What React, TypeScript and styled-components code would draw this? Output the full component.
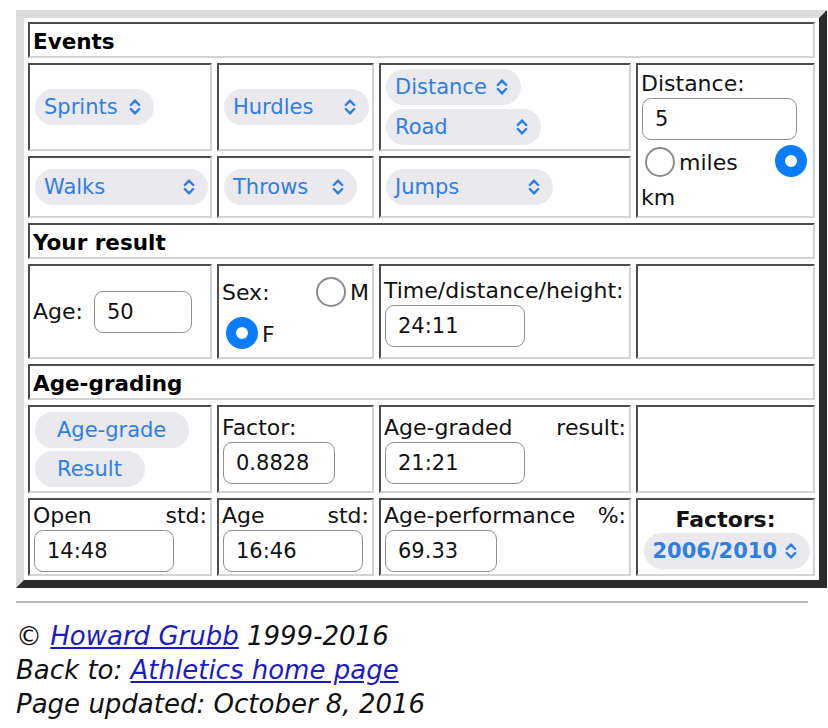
import React from "react";
import styled, { createGlobalStyle } from "styled-components";

const GlobalStyle = createGlobalStyle`
  body {
    margin: 0;
    padding: 10px 16px 0;
    background: #fff;
    color: #111;
    font-family: "DejaVu Sans", Verdana, sans-serif;
  }
`;

const Frame = styled.div`
  box-sizing: border-box;
  width: 811px;
  border: 8px solid;
  border-color: #dcdcdc #2b2b2b #2b2b2b #dcdcdc;
  padding: 4px;
  display: grid;
  grid-template-columns: 184px 157px 252px 179px;
  grid-template-rows: 36px 88px 62px 36px 95px 36px 88px 78px;
  gap: 5px;
`;

const Cell = styled.div<{ $rows?: number; $center?: boolean }>`
  box-sizing: border-box;
  min-width: 0;
  border: 2px solid;
  border-color: #4d4d4d #d3d3d3 #d3d3d3 #4d4d4d;
  padding: 0 3px;
  display: flex;
  flex-direction: column;
  justify-content: center;
  align-items: ${(p) => (p.$center ? "center" : "stretch")};
  grid-row: ${(p) => (p.$rows ? `span ${p.$rows}` : "auto")};
  font-size: 22px;
  line-height: 28px;
`;

const Heading = styled(Cell)`
  grid-column: 1 / -1;
  padding-top: 3px;
  font-weight: bold;
  font-size: 21.5px;
  color: #000;
`;

const Stack = styled.div`
  display: flex;
  flex-direction: column;
  align-items: flex-start;
  gap: 4px;
`;

const Select = styled.div<{ $w: number; $bold?: boolean }>`
  box-sizing: border-box;
  width: ${(p) => p.$w}px;
  height: 36px;
  margin-left: 2px;
  padding: 0 13px 0 9px;
  border-radius: 18px;
  background: #e9e9ee;
  color: #2f7fe2;
  font-size: 21px;
  font-weight: ${(p) => (p.$bold ? "bold" : "normal")};
  display: flex;
  align-items: center;
  justify-content: space-between;
  align-self: ${(p) => (p.$bold ? "center" : "flex-start")};
  flex: none;
`;

const PillButton = styled.div`
  box-sizing: border-box;
  height: 36px;
  margin-left: 2px;
  padding: 0 23px 0 22px;
  border-radius: 18px;
  background: #e9e9ee;
  color: #2f7fe2;
  font-size: 21px;
  display: flex;
  align-items: center;
`;

const Field = styled.input<{ $w: number }>`
  box-sizing: border-box;
  width: ${(p) => p.$w}px;
  height: 42px;
  margin: 1px 0 0 1px;
  padding: 0 12px;
  border: 1.5px solid #8f8f8f;
  border-radius: 9px;
  background: #fff;
  color: #111;
  font: 21px "DejaVu Sans", Verdana, sans-serif;
  outline: none;
  flex: none;
`;

const Label = styled.div<{ $spread?: boolean; $bold?: boolean }>`
  display: flex;
  justify-content: ${(p) => (p.$spread ? "space-between" : "flex-start")};
  font-weight: ${(p) => (p.$bold ? "bold" : "normal")};
  line-height: 27px;
`;

const Line = styled.div<{ $spread?: boolean }>`
  display: flex;
  align-items: flex-end;
  justify-content: ${(p) => (p.$spread ? "space-between" : "flex-start")};
  min-height: 32px;
`;

const UnitLine = styled(Line)`
  margin-top: 5px;
`;

const UnitLabel = styled(Label)`
  margin-top: 7px;
`;

const InlineRow = styled.div`
  display: flex;
  align-items: center;
  gap: 10px;
`;

const Choice = styled.label`
  display: flex;
  align-items: flex-end;
  gap: 4px;
`;

const Radio = styled.span<{ $on?: boolean; $end?: boolean }>`
  box-sizing: border-box;
  flex: none;
  width: ${(p) => (p.$on ? 32 : 30)}px;
  height: ${(p) => (p.$on ? 32 : 30)}px;
  margin: ${(p) => (p.$end ? "0 3px 0 0" : "0 0 0 4px")};
  border-radius: 50%;
  border: ${(p) => (p.$on ? "10px solid #0a7cff" : "2px solid #8c8c8c")};
  background: #fff;
`;

const Rule = styled.hr`
  width: 792px;
  height: 0;
  margin: 13px 0 0;
  border: 0;
  border-top: 2px solid #b8b8b8;
`;

const Footer = styled.div`
  margin-top: 16px;
  font-size: 26px;
  line-height: 34px;
  font-style: italic;
  color: #111;
  a {
    color: #1c1cc4;
    text-decoration: underline;
  }
`;

const Chevrons = () => (
  <svg width="12" height="18" viewBox="0 0 12 18" fill="none">
    <path d="M1.8 7 L6 2.6 L10.2 7" stroke="currentColor" strokeWidth="2.4" strokeLinecap="round" strokeLinejoin="round" />
    <path d="M1.8 11 L6 15.4 L10.2 11" stroke="currentColor" strokeWidth="2.4" strokeLinecap="round" strokeLinejoin="round" />
  </svg>
);

const Pick = ({ label, w, bold }: { label: string; w: number; bold?: boolean }) => (
  <Select $w={w} $bold={bold}>
    <span>{label}</span>
    <Chevrons />
  </Select>
);

const Spread = ({ words }: { words: string[] }) => (
  <Label $spread>
    {words.map((w) => (
      <span key={w}>{w}</span>
    ))}
  </Label>
);

export default function App() {
  return (
    <>
      <GlobalStyle />
      <Frame>
        <Heading>Events</Heading>

        <Cell>
          <Pick label="Sprints" w={119} />
        </Cell>
        <Cell>
          <Pick label="Hurdles" w={145} />
        </Cell>
        <Cell>
          <Stack>
            <Pick label="Distance" w={135} />
            <Pick label="Road" w={155} />
          </Stack>
        </Cell>
        <Cell $rows={2}>
          <Label>Distance:</Label>
          <Field $w={155} defaultValue="5" readOnly />
          <UnitLine $spread>
            <Choice>
              <Radio />
              miles
            </Choice>
            <Radio $on $end />
          </UnitLine>
          <UnitLabel>km</UnitLabel>
        </Cell>

        <Cell>
          <Pick label="Walks" w={173} />
        </Cell>
        <Cell>
          <Pick label="Throws" w={133} />
        </Cell>
        <Cell>
          <Pick label="Jumps" w={167} />
        </Cell>

        <Heading>Your result</Heading>

        <Cell>
          <InlineRow>
            <span>Age:</span>
            <Field $w={98} defaultValue="50" readOnly />
          </InlineRow>
        </Cell>
        <Cell>
          <Stack style={{ alignItems: "stretch", gap: 10 }}>
            <Line $spread>
              <span>Sex:</span>
              <Choice>
                <Radio />M
              </Choice>
            </Line>
            <Line>
              <Choice>
                <Radio $on />F
              </Choice>
            </Line>
          </Stack>
        </Cell>
        <Cell>
          <Label>Time/distance/height:</Label>
          <Field $w={140} defaultValue="24:11" readOnly />
        </Cell>
        <Cell />

        <Heading>Age-grading</Heading>

        <Cell>
          <Stack style={{ gap: 3 }}>
            <PillButton>Age-grade</PillButton>
            <PillButton>Result</PillButton>
          </Stack>
        </Cell>
        <Cell>
          <Label>Factor:</Label>
          <Field $w={112} defaultValue="0.8828" readOnly />
        </Cell>
        <Cell>
          <Spread words={["Age-graded", "result:"]} />
          <Field $w={140} defaultValue="21:21" readOnly />
        </Cell>
        <Cell />

        <Cell>
          <Spread words={["Open", "std:"]} />
          <Field $w={140} defaultValue="14:48" readOnly />
        </Cell>
        <Cell>
          <Spread words={["Age", "std:"]} />
          <Field $w={140} defaultValue="16:46" readOnly />
        </Cell>
        <Cell>
          <Spread words={["Age-performance", "%:"]} />
          <Field $w={112} defaultValue="69.33" readOnly />
        </Cell>
        <Cell $center>
          <Label $bold>Factors:</Label>
          <Pick label="2006/2010" w={166} bold />
        </Cell>
      </Frame>

      <Rule />
      <Footer>
        © <a href="#">Howard Grubb</a> 1999-2016
        <br />
        Back to: <a href="#">Athletics home page</a>
        <br />
        Page updated: October 8, 2016
      </Footer>
    </>
  );
}
